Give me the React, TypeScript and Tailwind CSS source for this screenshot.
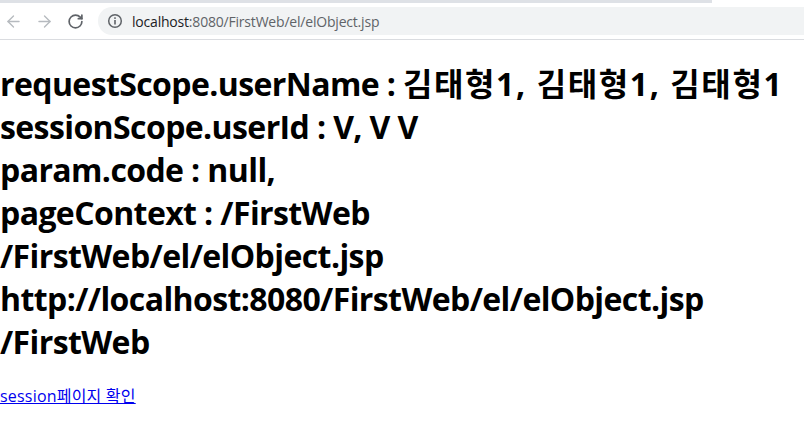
import { ArrowLeft, ArrowRight, RotateCw } from "lucide-react";

const lines: [string, string][] = [
  ["requestScope.userName : ", "김태형1, 김태형1, 김태형1"],
  ["sessionScope.userId : V, V V", ""],
  ["param.code : null,", ""],
  ["pageContext : /FirstWeb", ""],
  ["/FirstWeb/el/elObject.jsp", ""],
  ["http://localhost:8080/FirstWeb/el/elObject.jsp", ""],
  ["/FirstWeb", ""],
];

function Toolbar() {
  return (
    <div className="relative h-10 border-b border-[#dadce0] bg-white">
      <div className="absolute left-0 top-0 h-[3px] w-[712px] bg-[#dee1e6]" />
      <div className="flex h-full items-center pt-[3px]">
        <div className="flex w-[98px] items-center pl-[4px] gap-[12px]">
          <ArrowLeft size={19} strokeWidth={1.7} className="text-[#b6babf]" />
          <ArrowRight size={19} strokeWidth={1.7} className="text-[#b6babf]" />
          <RotateCw size={17} strokeWidth={2.4} className="ml-[1px] text-[#5f6368]" />
        </div>
        <div className="flex h-7 flex-1 items-center rounded-l-full bg-[#f1f3f4] pl-[9px]">
          <svg width="16" height="16" viewBox="0 0 16 16" className="text-[#5f6368]">
            <circle cx="8" cy="8" r="6.3" fill="none" stroke="currentColor" strokeWidth="1.5" />
            <rect x="7.2" y="7" width="1.6" height="4.5" fill="currentColor" />
            <rect x="7.2" y="4.3" width="1.6" height="1.6" fill="currentColor" />
          </svg>
          <span className="ml-[9px] text-[14px] font-['Open_Sans','Liberation_Sans',sans-serif] tracking-[-0.2px]">
            <span className="text-[#202124]">localhost</span>
            <span className="text-[#5f6368]">:8080/FirstWeb/el/elObject.jsp</span>
          </span>
        </div>
      </div>
    </div>
  );
}

export default function App() {
  return (
    <div className="h-[435px] w-[804px] overflow-hidden bg-white">
      <Toolbar />
      <div className="pt-[22px]">
        <h1 className="text-[32px] font-bold leading-[43px] text-black font-['Open_Sans','Noto_Sans_CJK_KR',sans-serif] tracking-[-0.6px] whitespace-pre">
          {lines.map(([a, b]) => (
            <div key={a}>
              {a}
              {b && <span className="tracking-[1.6px]">{b}</span>}
            </div>
          ))}
        </h1>
        <a
          href="#"
          className="mt-[21px] inline-block text-[16px] text-[#0000ee] underline font-['Open_Sans','Noto_Sans_CJK_KR',sans-serif] tracking-[0.2px]"
        >
          session페이지 확인
        </a>
      </div>
    </div>
  );
}
